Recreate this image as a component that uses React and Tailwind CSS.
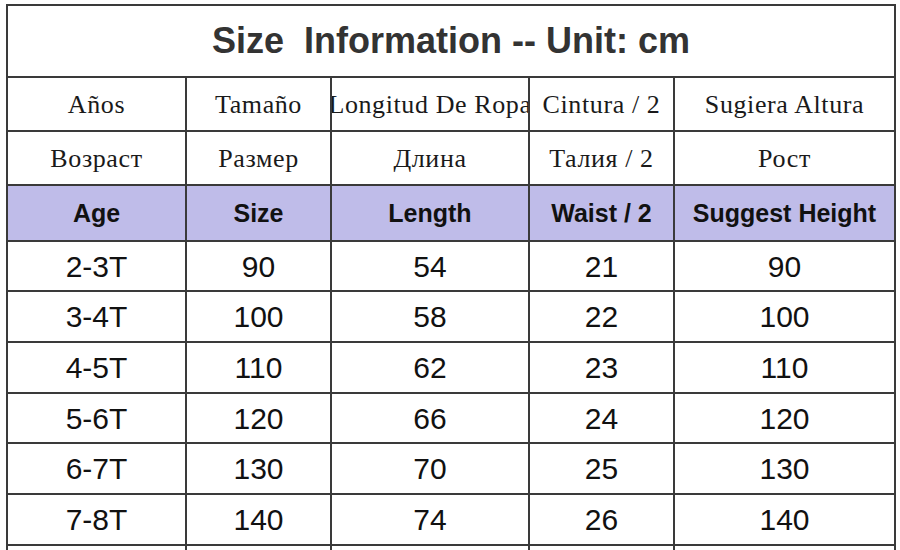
const spanish = ["Años", "Tamaño", "Longitud De Ropa", "Cintura / 2", "Sugiera Altura"];
const russian = ["Возраст", "Размер", "Длина", "Талия / 2", "Рост"];
const header = ["Age", "Size", "Length", "Waist / 2", "Suggest Height"];
const rows = [
  ["2-3T", "90", "54", "21", "90"],
  ["3-4T", "100", "58", "22", "100"],
  ["4-5T", "110", "62", "23", "110"],
  ["5-6T", "120", "66", "24", "120"],
  ["6-7T", "130", "70", "25", "130"],
  ["7-8T", "140", "74", "26", "140"],
];

const serif = { fontFamily: '"Liberation Serif", "DejaVu Serif", serif' };
const sans = { fontFamily: '"Liberation Sans", Arial, sans-serif' };

function Cell({ children, className = "" }) {
  return (
    <div className={`flex items-center justify-center overflow-hidden whitespace-nowrap ${className}`}>
      {children}
    </div>
  );
}

export default function App() {
  return (
    <div className="h-[550px] w-[900px] overflow-hidden bg-white pt-[4px] pl-[6px]">
      <div className="grid w-max grid-cols-[177px_143px_196px_143px_219px] grid-rows-[70px_52px_52px_54px_48px_49px_49px_48px_49px_49px_30px] gap-[2px] bg-[#3a3a3a] p-[2px]">
        {/* title */}
        <Cell className="col-span-5 bg-white text-[36px] font-bold text-[#333]">
          <span style={sans}>Size&nbsp; Information -- Unit: cm</span>
        </Cell>

        {spanish.map((t) => (
          <Cell key={t} className="bg-white text-[26px] tracking-[0.6px] text-[#1a1a1a]">
            <span style={serif}>{t}</span>
          </Cell>
        ))}
        {russian.map((t) => (
          <Cell key={t} className="bg-white text-[26px] tracking-[0.6px] text-[#1a1a1a]">
            <span style={serif}>{t}</span>
          </Cell>
        ))}

        {/* english header */}
        {header.map((t) => (
          <Cell key={t} className="bg-[#bfbce9] pt-[2px] text-[25px] font-bold text-[#111]">
            <span style={sans}>{t}</span>
          </Cell>
        ))}

        {rows.map((r) =>
          r.map((v, i) => (
            <Cell key={r[0] + i} className="bg-white text-[30px] text-[#111]">
              <span style={sans}>{v}</span>
            </Cell>
          ))
        )}

        {/* next row, cut off by the window */}
        {[0, 1, 2, 3, 4].map((i) => (
          <div key={i} className="bg-white" />
        ))}
      </div>
    </div>
  );
}
